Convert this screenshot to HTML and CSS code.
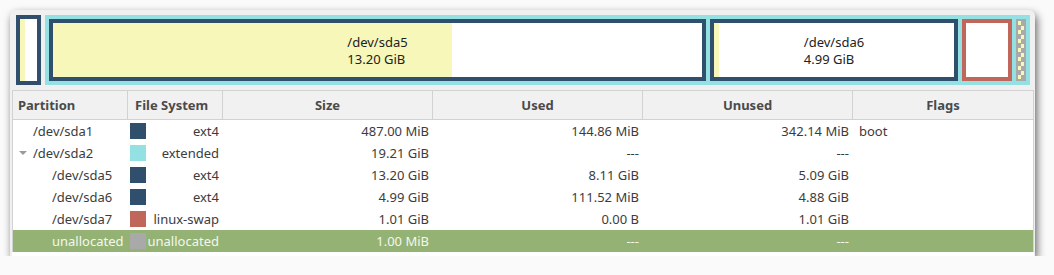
FILE: index.html
```html
<!DOCTYPE html>
<html lang="en">
<head>
    <meta charset="UTF-8">
    <title>GParted - /dev/sda</title>
    <link rel="stylesheet" href="styles.css">
</head>
<body>
    <div class="window">
        <div class="disk-map">
            <div class="part ext4 small">
                <div class="used" style="width: 5px"></div>
            </div>
            <div class="extended">
                <div class="part ext4 sda5" style="background: linear-gradient(to right, #f7f7ba 399px, #fff 399px)">
                    <div class="label">/dev/sda5<br>13.20 GiB</div>
                </div>
                <div class="part ext4 sda6" style="background: linear-gradient(to right, #f7f7ba 5px, #fff 5px)">
                    <div class="label">/dev/sda6<br>4.99 GiB</div>
                </div>
                <div class="part swap sda7"></div>
                <div class="unalloc"></div>
            </div>
        </div>

        <div class="grid">
            <div class="th left">Partition</div>
            <div class="th left fs-head">File System</div>
            <div class="th">Size</div>
            <div class="th">Used</div>
            <div class="th">Unused</div>
            <div class="th last">Flags</div>

            <div class="td name">/dev/sda1</div>
            <div class="td fs"><span class="swatch navy"></span><span class="fs-name">ext4</span></div>
            <div class="td num">487.00 MiB</div>
            <div class="td num">144.86 MiB</div>
            <div class="td num">342.14 MiB</div>
            <div class="td flags">boot</div>

            <div class="td name"><span class="expander"></span>/dev/sda2</div>
            <div class="td fs"><span class="swatch cyan"></span><span class="fs-name">extended</span></div>
            <div class="td num">19.21 GiB</div>
            <div class="td num">---</div>
            <div class="td num">---</div>
            <div class="td flags"></div>

            <div class="td name child">/dev/sda5</div>
            <div class="td fs"><span class="swatch navy"></span><span class="fs-name">ext4</span></div>
            <div class="td num">13.20 GiB</div>
            <div class="td num">8.11 GiB</div>
            <div class="td num">5.09 GiB</div>
            <div class="td flags"></div>

            <div class="td name child">/dev/sda6</div>
            <div class="td fs"><span class="swatch navy"></span><span class="fs-name">ext4</span></div>
            <div class="td num">4.99 GiB</div>
            <div class="td num">111.52 MiB</div>
            <div class="td num">4.88 GiB</div>
            <div class="td flags"></div>

            <div class="td name child">/dev/sda7</div>
            <div class="td fs"><span class="swatch red"></span><span class="fs-name">linux-swap</span></div>
            <div class="td num">1.01 GiB</div>
            <div class="td num">0.00 B</div>
            <div class="td num">1.01 GiB</div>
            <div class="td flags"></div>

            <div class="td name child sel">unallocated</div>
            <div class="td fs sel"><span class="swatch gray"></span><span class="fs-name">unallocated</span></div>
            <div class="td num sel">1.00 MiB</div>
            <div class="td num sel">---</div>
            <div class="td num sel">---</div>
            <div class="td flags sel"></div>
        </div>
        <div class="grid-end"></div>
    </div>
</body>
</html>
```

FILE: styles.css
```css
body {
    margin: 0;
    padding: 10px 19px 0 10px;
    background-color: #fafafa;
    font-family: "Noto Sans", "DejaVu Sans", sans-serif;
    font-size: 13px;
    color: #3c3c3c;
}

.window {
    background-color: #f0f0f0;
    border-radius: 6px 6px 0 0;
    box-shadow: 2px 4px 9px rgba(0, 0, 0, 0.6);
    padding: 5px 1px 0 2px;
}

/* barra de particiones */
.disk-map {
    display: flex;
    gap: 4px;
    height: 70px;
    margin: 0 4px 5px 4px;
}

.part {
    box-sizing: border-box;
    border: 4px solid #2f4f6c;
    background-color: #fff;
    display: flex;
    align-items: center;
    justify-content: center;
}

.small {
    width: 25px;
    justify-content: flex-start;
}

.small .used {
    height: 100%;
    background-color: #f7f7ba;
}

.extended {
    flex: 1;
    display: flex;
    gap: 4px;
    padding: 4px;
    background-color: #93e1e3;
}

.sda5 {
    width: 657px;
}

.sda6 {
    width: 248px;
}

.sda7 {
    width: 50px;
    border-color: #c1665a;
}

.unalloc {
    width: 10px;
    box-sizing: border-box;
    border: 2px solid #a9a9a9;
    background-color: #a9a9a9;
    background-image:
        repeating-linear-gradient(to bottom, #f7f7ba 0 4px, transparent 4px 9px),
        repeating-linear-gradient(to bottom, transparent 0 5px, #f7f7ba 5px 9px);
    background-size: 3px 100%, 3px 100%;
    background-position: 0 0, 3px 0;
    background-repeat: no-repeat;
}

.label {
    line-height: 17px;
    color: #222;
    margin-top: 1px;
}

/* tabla */
.grid {
    display: grid;
    grid-template-columns: 115px 95px 210px 210px 210px 180px;
    background-color: #fff;
    border-left: 1px solid #d2d2d2;
    border-right: 1px solid #d2d2d2;
}

.grid-end {
    height: 4px;
    background-color: #fff;
}

.th {
    height: 28px;
    line-height: 28px;
    background-color: #f1f1f1;
    border-top: 1px solid #d2d2d2;
    border-bottom: 1px solid #d2d2d2;
    border-right: 1px solid #d2d2d2;
    font-weight: bold;
    color: #4a4a4a;
    text-align: center;
    white-space: nowrap;
}

.th.left {
    text-align: left;
    padding-left: 5px;
}

.th.fs-head {
    padding-left: 7px;
}

.th.last {
    border-right: none;
}

.td {
    height: 22px;
    line-height: 22px;
    white-space: nowrap;
    overflow: hidden;
}

.name {
    padding-left: 20px;
    position: relative;
}

.name.child {
    padding-left: 39px;
}

.expander {
    position: absolute;
    left: 6px;
    top: 9px;
    width: 0;
    height: 0;
    border-left: 4px solid transparent;
    border-right: 4px solid transparent;
    border-top: 4px solid #9a9a9a;
}

.fs {
    display: flex;
    align-items: center;
    padding: 0 4px 0 2px;
}

.swatch {
    width: 16px;
    height: 16px;
    flex: none;
}

.navy { background-color: #2f4f6c; }
.cyan { background-color: #93e1e3; }
.red { background-color: #c1665a; }
.gray { background-color: #a9a9a9; }

.fs-name {
    flex: 1;
    text-align: right;
}

.num {
    text-align: right;
    padding-right: 4px;
}

.flags {
    padding-left: 6px;
}

.sel {
    background-color: #93b273;
    color: #f4f7ef;
}
```
